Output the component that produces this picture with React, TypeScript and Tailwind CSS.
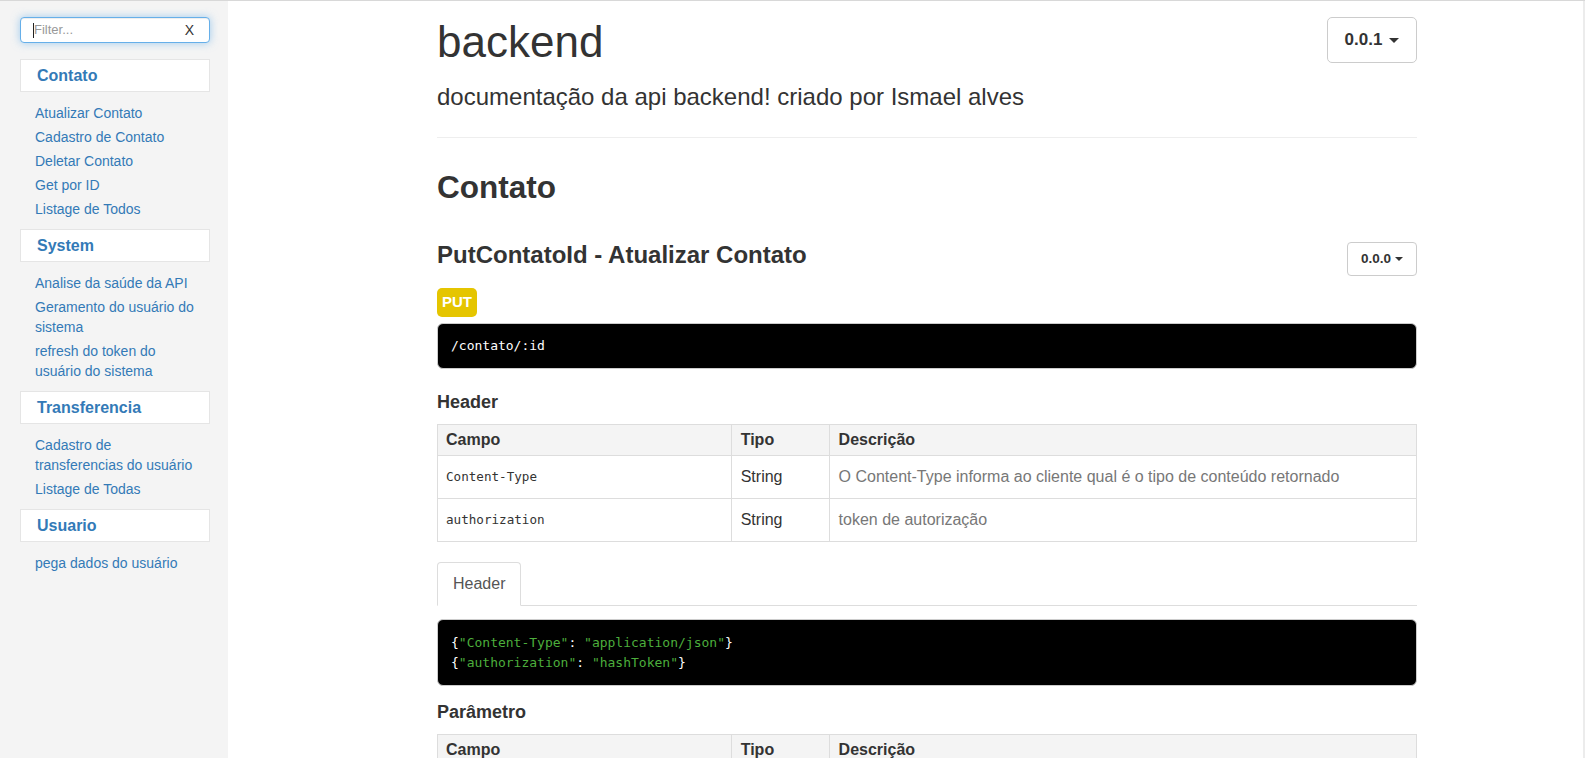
const sans = { fontFamily: '"Liberation Sans", Arial, sans-serif' };

type NavGroup = { title: string; items: string[] };

const groups: NavGroup[] = [
  {
    title: "Contato",
    items: [
      "Atualizar Contato",
      "Cadastro de Contato",
      "Deletar Contato",
      "Get por ID",
      "Listage de Todos",
    ],
  },
  {
    title: "System",
    items: [
      "Analise da saúde da API",
      "Geramento do usuário do sistema",
      "refresh do token do usuário do sistema",
    ],
  },
  {
    title: "Transferencia",
    items: ["Cadastro de transferencias do usuário", "Listage de Todas"],
  },
  { title: "Usuario", items: ["pega dados do usuário"] },
];

const headerRows = [
  {
    campo: "Content-Type",
    tipo: "String",
    desc: "O Content-Type informa ao cliente qual é o tipo de conteúdo retornado",
  },
  { campo: "authorization", tipo: "String", desc: "token de autorização" },
];

const paramRows = [
  { campo: "id", tipo: "Number", desc: "id do contato" },
  { campo: "nome", tipo: "String", desc: "nome do contato" },
];

const headerExample = [
  { key: "Content-Type", value: "application/json" },
  { key: "authorization", value: "hashToken" },
];

const mono = { fontFamily: '"DejaVu Sans Mono", monospace' };

function Sidebar() {
  return (
    <aside className="w-[228px] shrink-0 bg-[#f4f4f4] pt-[16px] pl-[20px] pr-[18px]">
      <div className="flex h-[26px] items-center rounded-[4px] border border-[#66afe9] bg-white pl-[12px] pr-[15px] shadow-[0_0_8px_rgba(102,175,233,0.6),inset_0_1px_1px_rgba(0,0,0,0.075)]">
        <span className="h-[15px] w-px bg-[#222]" />
        <span className="flex-1 text-[13px] text-[#999]">Filter...</span>
        <span className="text-[14px] text-[#333]">X</span>
      </div>
      {groups.map((g, i) => (
        <div key={g.title} className={i === 0 ? "mt-[16px]" : ""}>
          <div className="flex h-[33px] items-center border border-[#e5e5e5] bg-white pl-[16px] text-[16px] font-bold text-[#337ab7]">
            {g.title}
          </div>
          <ul className="pt-[9px] pb-[8px]">
            {g.items.map((item) => (
              <li
                key={item}
                className="py-[2px] pl-[15px] pr-[8px] text-[14px] leading-[20px] text-[#337ab7]"
              >
                {item}
              </li>
            ))}
          </ul>
        </div>
      ))}
    </aside>
  );
}

function Caret({ big }: { big?: boolean }) {
  return big ? (
    <span className="ml-[7px] h-0 w-0 border-x-[5px] border-t-[5px] border-x-transparent border-t-[#333]" />
  ) : (
    <span className="ml-[4px] h-0 w-0 border-x-[4px] border-t-[4px] border-x-transparent border-t-[#333]" />
  );
}

function FieldTable({
  rows,
}: {
  rows: { campo: string; tipo: string; desc: string }[];
}) {
  return (
    <table className="mt-[12px] w-full border-collapse border border-[#ddd] text-left text-[16px]">
      <thead>
        <tr className="bg-[#f4f4f4]">
          <th className="w-[30%] border border-[#ddd] px-[8px] py-[5px] leading-[20px] font-bold text-[#333]">
            Campo
          </th>
          <th className="w-[10%] border border-[#ddd] px-[9px] py-[5px] leading-[20px] font-bold text-[#333]">
            Tipo
          </th>
          <th className="w-[60%] border border-[#ddd] px-[9px] py-[5px] leading-[20px] font-bold text-[#333]">
            Descrição
          </th>
        </tr>
      </thead>
      <tbody>
        {rows.map((r) => (
          <tr key={r.campo}>
            <td
              className="border border-[#ddd] px-[8px] py-[11px] text-[12.6px] leading-[20px] text-[#333]"
              style={mono}
            >
              {r.campo}
            </td>
            <td className="border border-[#ddd] px-[9px] py-[11px] leading-[20px] text-[#333]">
              {r.tipo}
            </td>
            <td className="border border-[#ddd] px-[9px] py-[11px] leading-[20px] text-[#777]">
              {r.desc}
            </td>
          </tr>
        ))}
      </tbody>
    </table>
  );
}

export default function App() {
  return (
    <div className="flex h-screen flex-col overflow-hidden bg-white" style={sans}>
      <div className="h-px shrink-0 bg-[#d8d8d8]" />
      <div className="flex min-h-0 flex-1">
        <Sidebar />
        <main className="min-w-0 flex-1 pl-[209px]">
          <div className="w-[980px] text-[#333]">
            <div className="flex items-start justify-between pt-[16px]">
              <h1 className="text-[44px] leading-[50px] font-normal">backend</h1>
              <button className="flex h-[46px] w-[90px] items-center justify-center rounded-[5px] border border-[#ccc] bg-white text-[17px] font-bold text-[#333]">
                0.0.1
                <Caret big />
              </button>
            </div>
            <p className="mt-[18px] text-[24px] leading-[24px]">
              documentação da api backend! criado por Ismael alves
            </p>
            <hr className="mt-[28px] border-t border-[#eee]" />

            <h2 className="mt-[33px] text-[31.5px] leading-[32px] font-bold">Contato</h2>

            <div className="mt-[39px] flex items-start justify-between">
              <h3 className="mt-px text-[24px] leading-[24px] font-bold">
                PutContatoId - Atualizar Contato
              </h3>
              <button className="flex h-[34px] w-[70px] items-center justify-center rounded-[4px] border border-[#ccc] bg-white text-[13.5px] font-bold text-[#333]">
                0.0.0
                <Caret />
              </button>
            </div>

            <div className="mt-[12px] flex h-[29px] w-[40px] items-center justify-center rounded-[5px] bg-[#e5c500] text-[15px] font-bold text-white">
              PUT
            </div>

            <pre
              className="mt-[6px] rounded-[6px] border border-[#ccc] bg-black px-[13px] py-[12px] text-[13px] leading-[20px] text-white"
              style={mono}
            >
              /contato/:id
            </pre>

            <h4 className="mt-[23px] text-[18px] leading-[20px] font-bold">Header</h4>
            <FieldTable rows={headerRows} />

            <ul className="mt-[20px] flex border-b border-[#ddd]">
              <li className="-mb-px rounded-t-[4px] border border-[#ddd] border-b-white bg-white px-[15px] py-[11px] text-[16px] leading-[20px] text-[#555]">
                Header
              </li>
            </ul>

            <div
              className="mt-[13px] rounded-[6px] border border-[#ccc] bg-black px-[13px] pt-[13px] pb-[12px] text-[13px] leading-[20px] whitespace-pre text-white"
              style={mono}
            >
              {headerExample.map((h) => (
                <div key={h.key}>
                  {"{"}
                  <span className="text-[#4cae3c]">"{h.key}"</span>:{" "}
                  <span className="text-[#4cae3c]">"{h.value}"</span>
                  {"}"}
                </div>
              ))}
            </div>

            <h4 className="mt-[16px] text-[18px] leading-[20px] font-bold">Parâmetro</h4>
            <FieldTable rows={paramRows} />
          </div>
        </main>
        <div className="w-[2px] shrink-0 bg-[#ececec]" />
      </div>
    </div>
  );
}
